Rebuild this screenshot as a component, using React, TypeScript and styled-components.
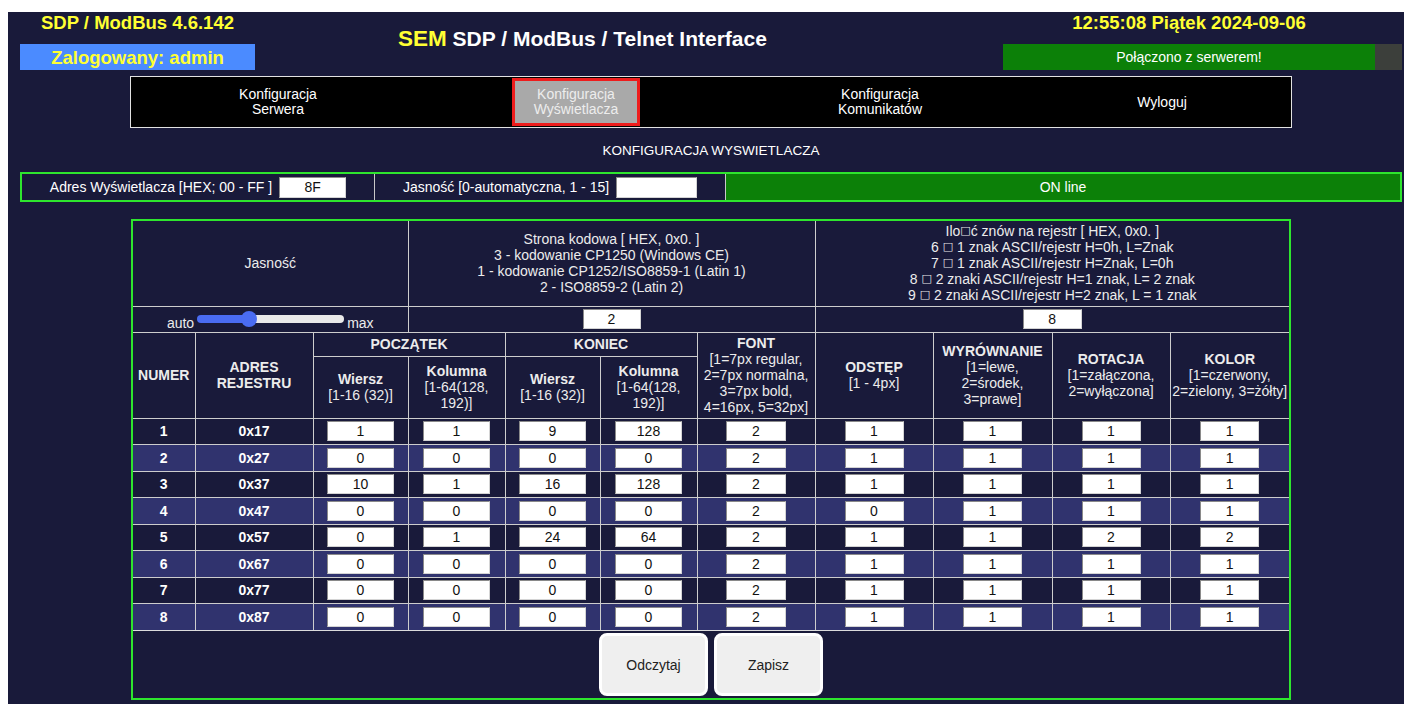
import styled, { createGlobalStyle, css } from "styled-components";

type RegisterRow = {
    id: number;
    address: string;
    values: number[];
};

const registers: RegisterRow[] = [
    { id: 1, address: "0x17", values: [1, 1, 9, 128, 2, 1, 1, 1, 1] },
    { id: 2, address: "0x27", values: [0, 0, 0, 0, 2, 1, 1, 1, 1] },
    { id: 3, address: "0x37", values: [10, 1, 16, 128, 2, 1, 1, 1, 1] },
    { id: 4, address: "0x47", values: [0, 0, 0, 0, 2, 0, 1, 1, 1] },
    { id: 5, address: "0x57", values: [0, 1, 24, 64, 2, 1, 1, 2, 2] },
    { id: 6, address: "0x67", values: [0, 0, 0, 0, 2, 1, 1, 1, 1] },
    { id: 7, address: "0x77", values: [0, 0, 0, 0, 2, 1, 1, 1, 1] },
    { id: 8, address: "0x87", values: [0, 0, 0, 0, 2, 1, 1, 1, 1] },
];

// widths of the table columns and of the inputs inside the value columns
const columnWidths = [62, 118, 95, 97, 95, 97, 118, 118, 119, 118, 119];
const fieldWidths = [67, 67, 67, 67, 60, 59, 59, 59, 59];

const brightness = { value: 5, min: 0, max: 15 };

const GlobalStyle = createGlobalStyle`
  html, body {
    margin: 0;
    padding: 0;
    background: #fff;
    overflow: hidden;
  }
  body {
    font-family: "Liberation Sans", Arial, sans-serif;
  }
`;

const Page = styled.div`
  margin: 12px 0 0 8px;
  min-height: calc(100vh - 12px);
  box-sizing: border-box;
  padding: 0 2px 0 12px;
  background: #191a3a;
  color: #ececec;
  font-size: 14px;
`;

const Header = styled.header`
  display: grid;
  grid-template-columns: 235px 1fr 399px;
  height: 58px;
`;

const SideBlock = styled.div`
  display: flex;
  flex-direction: column;
  justify-content: space-between;
`;

const YellowLine = styled.div`
  color: #ffff33;
  font-weight: bold;
  font-size: 18.5px;
  line-height: 22px;
  text-align: center;
`;

const UserBox = styled(YellowLine)`
  height: 26px;
  line-height: 27px;
  background: #4b8bff;
`;

const Clock = styled(YellowLine)`
  width: 372px;
`;

const StatusLine = styled.div`
  display: flex;
  height: 26px;
`;

const StatusOk = styled.div`
  width: 372px;
  background: #0c8008;
  color: #fff;
  font-size: 14px;
  line-height: 26px;
  text-align: center;
`;

const StatusTail = styled.div`
  flex: 1;
  background: #3c3f3b;
`;

const AppTitle = styled.h1`
  margin: 0;
  padding: 0 0 5px 143px;
  align-self: center;
  font-size: 21px;
  font-weight: bold;
  color: #fff;
  white-space: nowrap;
`;

const Brand = styled.span`
  color: #ffff33;
  font-size: 22.5px;
`;

const Nav = styled.nav`
  width: 1162px;
  height: 52px;
  margin: 6px auto 0;
  box-sizing: border-box;
  border: 1px solid #e2e2e2;
  background: #000;
  display: grid;
  grid-template-columns: 294px 302px 306px 1fr;
  align-items: center;
`;

const NavItem = styled.div<{ $active?: boolean }>`
  justify-self: center;
  text-align: center;
  font-size: 14px;
  line-height: 15px;
  color: #fff;
  ${(p) =>
        p.$active &&
        css`
      width: 128px;
      height: 48px;
      box-sizing: border-box;
      display: flex;
      align-items: center;
      justify-content: center;
      background: #a9a9a9;
      border: 3px solid #ee1c1c;
      color: #ededed;
    `}
`;

const SectionTitle = styled.div`
  margin: 15px 0 14px;
  font-size: 13.5px;
  line-height: 15px;
  text-align: center;
  color: #fff;
`;

const ConfigBar = styled.div`
  display: grid;
  grid-template-columns: 352px 351px 1fr;
  height: 30px;
  box-sizing: border-box;
  border: 2px solid #2ee52e;
`;

const ConfigCell = styled.div<{ $online?: boolean }>`
  display: flex;
  align-items: center;
  justify-content: center;
  gap: 7px;
  border-left: 1px solid #c8c8c8;
  color: #fff;
  &:first-child {
    border-left: none;
  }
  ${(p) =>
        p.$online &&
        css`
      background: #0c8008;
    `}
`;

const Field = styled.input<{ $w: number; $h?: number }>`
  width: ${(p) => p.$w}px;
  height: ${(p) => p.$h ?? 20}px;
  box-sizing: border-box;
  margin: 0;
  padding: 0;
  border: 1px solid;
  border-color: #8a8a8a #d4d4d4 #d4d4d4 #8a8a8a;
  background: #fff;
  color: #111;
  font: 14px "Liberation Sans", Arial, sans-serif;
  text-align: center;
  outline: none;
  vertical-align: middle;
`;

const Panel = styled.section`
  width: 1160px;
  margin: 17px auto 0;
  box-sizing: border-box;
  border: 2px solid #2ee52e;
`;

const RegisterTable = styled.table`
  width: 100%;
  table-layout: fixed;
  border-collapse: collapse;
  border-style: hidden;
  font-size: 14px;
  line-height: 16px;
  color: #ececec;
`;

const HeadRow = styled.tr<{ $h: number }>`
  height: ${(p) => p.$h}px;
`;

const DataRow = styled.tr<{ $alt: boolean }>`
  height: 26.5px;
  background: ${(p) => (p.$alt ? "#30336e" : "transparent")};
`;

const Th = styled.th<{ $bottom?: boolean }>`
  border: 1px solid #cdcdcd;
  padding: 1px;
  font-weight: normal;
  text-align: center;
  vertical-align: ${(p) => (p.$bottom ? "bottom" : "middle")};
  white-space: nowrap;
`;

const Td = styled.td<{ $strong?: boolean }>`
  border: 1px solid #cdcdcd;
  padding: 0;
  text-align: center;
  vertical-align: middle;
  color: #fff;
  font-weight: ${(p) => (p.$strong ? "bold" : "normal")};
`;

const Label = styled.strong`
  font-weight: bold;
`;

// replacement glyph the firmware prints for characters it cannot encode
const Tofu = styled.span`
  font-family: "DejaVu Sans", sans-serif;
  font-size: 11px;
  line-height: 0;
  vertical-align: 2px;
`;

const SliderWrap = styled.div`
  display: inline-flex;
  align-items: flex-end;
  gap: 3px;
`;

const SliderTrack = styled.div`
  position: relative;
  width: 147px;
  height: 16px;
  margin-bottom: 4px;
`;

const SliderRail = styled.div<{ $pct: number }>`
  position: absolute;
  left: 0;
  right: 0;
  top: 4px;
  height: 8px;
  border-radius: 4px;
  background: linear-gradient(
    to right,
    #4a6cf2 0 ${(p) => p.$pct}%,
    #e9e9e9 ${(p) => p.$pct}% 100%
  );
`;

const SliderThumb = styled.div`
  position: absolute;
  top: 0;
  width: 16px;
  height: 16px;
  border-radius: 50%;
  background: #4a6cf2;
`;

const Actions = styled.div`
  display: flex;
  justify-content: center;
  gap: 6px;
  padding: 2px 0;
  border-top: 1px solid #dcdcdc;
`;

const ActionButton = styled.button`
  width: 109px;
  height: 63px;
  box-sizing: border-box;
  background: #efefef;
  border: 3px solid #fff;
  border-radius: 8px;
  color: #222;
  font: 14px "Liberation Sans", Arial, sans-serif;
  cursor: pointer;
`;

function BrightnessSlider() {
    const frac = (brightness.value - brightness.min) / (brightness.max - brightness.min);
    const thumbLeft = frac * (147 - 16);
    const pct = ((thumbLeft + 8) / 147) * 100;
    return (
        <SliderWrap>
            <span>auto</span>
            <SliderTrack>
                <SliderRail $pct={pct} />
                <SliderThumb style={{ left: thumbLeft }} />
            </SliderTrack>
            <span>max</span>
        </SliderWrap>
    );
}

export default function App() {
    return (
        <>
            <GlobalStyle />
            <Page>
                <Header>
                    <SideBlock>
                        <YellowLine>SDP / ModBus 4.6.142</YellowLine>
                        <UserBox>Zalogowany: admin</UserBox>
                    </SideBlock>
                    <AppTitle>
                        <Brand>SEM</Brand> SDP / ModBus / Telnet Interface
                    </AppTitle>
                    <SideBlock>
                        <Clock>12:55:08 Piątek 2024-09-06</Clock>
                        <StatusLine>
                            <StatusOk>Połączono z serwerem!</StatusOk>
                            <StatusTail />
                        </StatusLine>
                    </SideBlock>
                </Header>

                <Nav>
                    <NavItem>Konfiguracja<br />Serwera</NavItem>
                    <NavItem $active>Konfiguracja<br />Wyświetlacza</NavItem>
                    <NavItem>Konfiguracja<br />Komunikatów</NavItem>
                    <NavItem>Wyloguj</NavItem>
                </Nav>

                <SectionTitle>KONFIGURACJA WYSWIETLACZA</SectionTitle>

                <ConfigBar>
                    <ConfigCell>
                        Adres Wyświetlacza [HEX; 00 - FF ]
                        <Field $w={67} $h={21} defaultValue="8F" />
                    </ConfigCell>
                    <ConfigCell>
                        Jasność [0-automatyczna, 1 - 15]
                        <Field $w={81} $h={21} defaultValue="" />
                    </ConfigCell>
                    <ConfigCell $online>ON line</ConfigCell>
                </ConfigBar>

                <Panel>
                    <RegisterTable>
                        <colgroup>
                            {columnWidths.map((w, i) => (
                                <col key={i} style={{ width: w }} />
                            ))}
                        </colgroup>
                        <thead>
                            <HeadRow $h={85}>
                                <Th colSpan={3}>Jasność</Th>
                                <Th colSpan={4}>
                                    Strona kodowa [ HEX, 0x0. ]<br />
                                    3 - kodowanie CP1250 (Windows CE)<br />
                                    1 - kodowanie CP1252/ISO8859-1 (Latin 1)<br />
                                    2 - ISO8859-2 (Latin 2)
                                </Th>
                                <Th colSpan={4}>
                                    Ilo<Tofu>□</Tofu>ć znów na rejestr [ HEX, 0x0. ]<br />
                                    6 <Tofu>□</Tofu> 1 znak ASCII/rejestr H=0h, L=Znak<br />
                                    7 <Tofu>□</Tofu> 1 znak ASCII/rejestr H=Znak, L=0h<br />
                                    8 <Tofu>□</Tofu> 2 znaki ASCII/rejestr H=1 znak, L= 2 znak<br />
                                    9 <Tofu>□</Tofu> 2 znaki ASCII/rejestr H=2 znak, L = 1 znak
                                </Th>
                            </HeadRow>
                            <HeadRow $h={26}>
                                <Th colSpan={3} $bottom>
                                    <BrightnessSlider />
                                </Th>
                                <Th colSpan={4}>
                                    <Field $w={58} defaultValue="2" />
                                </Th>
                                <Th colSpan={4}>
                                    <Field $w={59} defaultValue="8" />
                                </Th>
                            </HeadRow>
                            <HeadRow $h={24}>
                                <Th rowSpan={2}><Label>NUMER</Label></Th>
                                <Th rowSpan={2}><Label>ADRES<br />REJESTRU</Label></Th>
                                <Th colSpan={2}><Label>POCZĄTEK</Label></Th>
                                <Th colSpan={2}><Label>KONIEC</Label></Th>
                                <Th rowSpan={2}>
                                    <Label>FONT</Label><br />
                                    [1=7px regular,<br />
                                    2=7px normalna,<br />
                                    3=7px bold,<br />
                                    4=16px, 5=32px]
                                </Th>
                                <Th rowSpan={2}>
                                    <Label>ODSTĘP</Label><br />
                                    [1 - 4px]
                                </Th>
                                <Th rowSpan={2}>
                                    <Label>WYRÓWNANIE</Label><br />
                                    [1=lewe,<br />
                                    2=środek,<br />
                                    3=prawe]
                                </Th>
                                <Th rowSpan={2}>
                                    <Label>ROTACJA</Label><br />
                                    [1=załączona,<br />
                                    2=wyłączona]
                                </Th>
                                <Th rowSpan={2}>
                                    <Label>KOLOR</Label><br />
                                    [1=czerwony,<br />
                                    2=zielony, 3=żółty]
                                </Th>
                            </HeadRow>
                            <HeadRow $h={62}>
                                <Th><Label>Wiersz</Label><br />[1-16 (32)]</Th>
                                <Th><Label>Kolumna</Label><br />[1-64(128,<br />192)]</Th>
                                <Th><Label>Wiersz</Label><br />[1-16 (32)]</Th>
                                <Th><Label>Kolumna</Label><br />[1-64(128,<br />192)]</Th>
                            </HeadRow>
                        </thead>
                        <tbody>
                            {registers.map((r, i) => (
                                <DataRow key={r.id} $alt={i % 2 === 1}>
                                    <Td $strong>{r.id}</Td>
                                    <Td $strong>{r.address}</Td>
                                    {r.values.map((v, j) => (
                                        <Td key={j}>
                                            <Field $w={fieldWidths[j]} defaultValue={String(v)} />
                                        </Td>
                                    ))}
                                </DataRow>
                            ))}
                        </tbody>
                    </RegisterTable>
                    <Actions>
                        <ActionButton>Odczytaj</ActionButton>
                        <ActionButton>Zapisz</ActionButton>
                    </Actions>
                </Panel>
            </Page>
        </>
    );
}
